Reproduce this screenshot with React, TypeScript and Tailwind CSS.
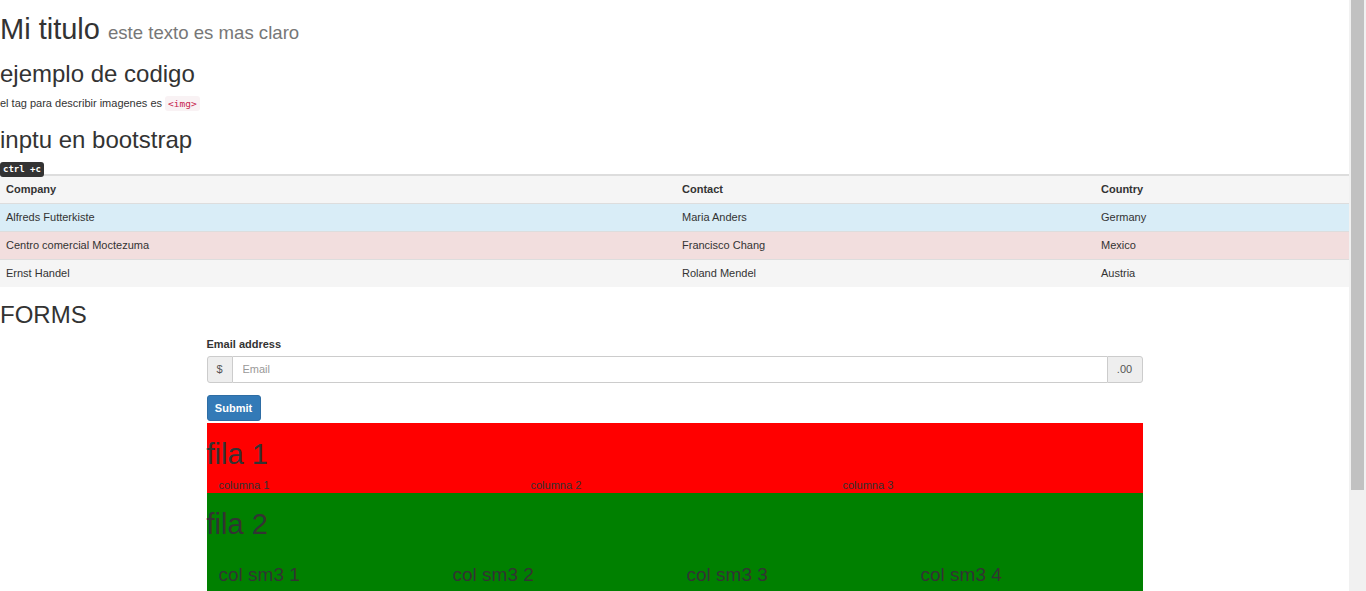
import React from 'react';

const rows = [
  { company: 'Alfreds Futterkiste', contact: 'Maria Anders', country: 'Germany', tone: 'bg-[#d9edf7]' },
  { company: 'Centro comercial Moctezuma', contact: 'Francisco Chang', country: 'Mexico', tone: 'bg-[#f2dede]' },
  { company: 'Ernst Handel', contact: 'Roland Mendel', country: 'Austria', tone: 'bg-[#f5f5f5]' },
];

const mono = { fontFamily: '"DejaVu Sans Mono", "Liberation Mono", monospace' };

export default function App() {
  return (
    <div
      className="flex w-full bg-white text-[#333]"
      style={{ fontFamily: '"Liberation Sans", Arial, sans-serif' }}
    >
      <main className="w-[1349px] shrink-0">
        <h1 className="mt-[13px] text-[29px] leading-[32px] font-normal">
          Mi titulo <small className="text-[18.6px] text-[#777]">este texto es mas claro</small>
        </h1>

        <h2 className="mt-[12px] text-[24px] leading-[26px] font-normal">ejemplo de codigo</h2>
        <p className="mt-[8px] text-[11px] leading-[16px]">
          el tag para describir imagenes es{' '}
          <code
            className="rounded-[3px] bg-[#f9f2f4] px-[3px] py-[2px] text-[9.5px] text-[#c7254e]"
            style={mono}
          >
            &lt;img&gt;
          </code>
        </p>

        <h2 className="mt-[15px] text-[24px] leading-[26px] font-normal">inptu en bootstrap</h2>
        <div className="mt-[6px] h-[15px] leading-none">
          <kbd
            className="inline-flex h-[15px] items-center rounded-[3px] bg-[#333] px-[3px] text-[9px] font-bold text-white"
            style={mono}
          >
            ctrl +c
          </kbd>
        </div>

        {/* tabla */}
        <table className="w-full border-collapse text-[11px] leading-[16px]">
          <thead>
            <tr className="border-t-2 border-[#ddd] bg-[#f5f5f5]">
              <th className="h-[28px] w-[676px] px-[6px] text-left font-bold">Company</th>
              <th className="h-[28px] w-[419px] px-[6px] text-left font-bold">Contact</th>
              <th className="h-[28px] px-[6px] text-left font-bold">Country</th>
            </tr>
          </thead>
          <tbody>
            {rows.map(r => (
              <tr key={r.company} className={`border-t border-[#ddd] ${r.tone}`}>
                <td className="h-[28px] px-[6px]">{r.company}</td>
                <td className="h-[28px] px-[6px]">{r.contact}</td>
                <td className="h-[28px] px-[6px]">{r.country}</td>
              </tr>
            ))}
          </tbody>
        </table>

        <h2 className="mt-[15px] text-[24px] leading-[26px] font-normal">FORMS</h2>

        <div className="mx-auto w-[936px]">
          <label className="mt-[8px] mb-[4px] block text-[11px] leading-[16px] font-bold">Email address</label>
          <div className="flex h-[27px] text-[11px]">
            <span className="flex w-[26px] items-center justify-center rounded-l-[3px] border border-[#ccc] bg-[#eee] text-[#555]">
              $
            </span>
            <input
              type="text"
              placeholder="Email"
              className="min-w-0 flex-1 border-y border-[#ccc] px-[10px] text-[11px] text-[#555] outline-none placeholder:text-[#999]"
            />
            <span className="flex w-[36px] items-center justify-center rounded-r-[3px] border border-[#ccc] bg-[#eee] text-[#555]">
              .00
            </span>
          </div>

          <button className="mt-[12px] h-[26px] w-[54px] rounded-[3px] border border-[#2e6da4] bg-[#337ab7] text-[11px] font-bold text-white">
            Submit
          </button>

          <div className="mt-[2px] bg-[#ff0000]">
            <h1 className="pt-[15px] text-[29px] leading-[32px] font-normal">fila 1</h1>
            <div className="mt-[7px] grid grid-cols-3 text-[11px] leading-[16px]">
              <div className="px-[12px]">columna 1</div>
              <div className="px-[12px]">columna 2</div>
              <div className="px-[12px]">columna 3</div>
            </div>
          </div>

          <div className="bg-[#008000] pb-[20px]">
            <h1 className="pt-[15px] text-[29px] leading-[32px] font-normal">fila 2</h1>
            <div className="mt-[24px] grid grid-cols-4 text-[19px] leading-[21px]">
              <div className="px-[12px]">col sm3 1</div>
              <div className="px-[12px]">col sm3 2</div>
              <div className="px-[12px]">col sm3 3</div>
              <div className="px-[12px]">col sm3 4</div>
            </div>
          </div>
        </div>
      </main>

      {/* barra de scroll */}
      <div className="sticky top-0 h-[591px] w-[17px] shrink-0 bg-[#f1f1f1] px-[2px]">
        <div className="h-[490px] bg-[#c1c1c1]" />
      </div>
    </div>
  );
}
